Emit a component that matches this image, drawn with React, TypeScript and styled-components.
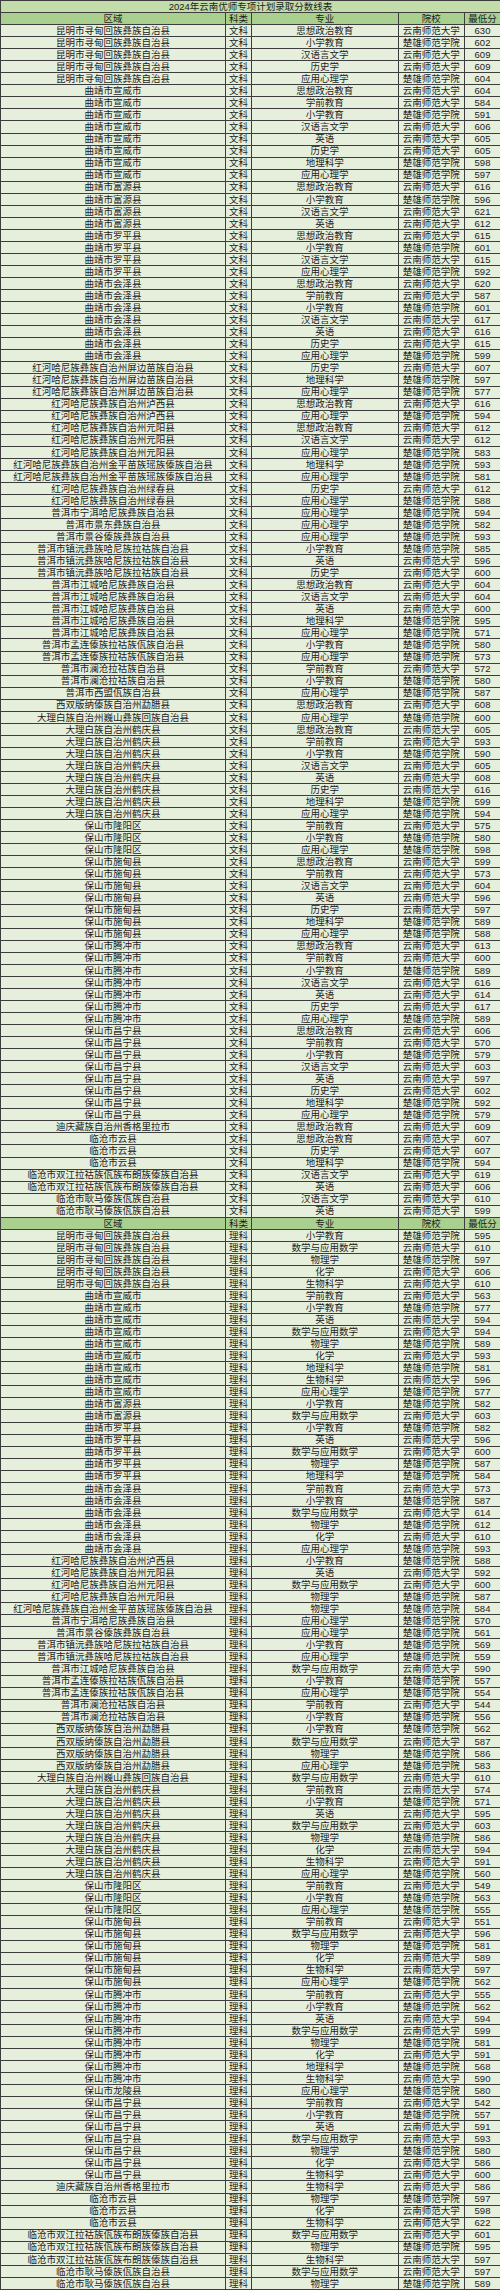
import styled, { createGlobalStyle } from "styled-components";

const YN = "云南师范大学";
const CX = "楚雄师范学院";

// 专业, 院校, 最低分
type Entry = [string, string, number];
type Group = [string, Entry[]];

const y = (major: string, score: number): Entry => [major, YN, score];
const c = (major: string, score: number): Entry => [major, CX, score];

const KM = "昆明市寻甸回族彝族自治县";
const XW = "曲靖市宣威市";
const FY = "曲靖市富源县";
const LP = "曲靖市罗平县";
const HZ = "曲靖市会泽县";
const PB = "红河哈尼族彝族自治州屏边苗族自治县";
const LX = "红河哈尼族彝族自治州泸西县";
const YY = "红河哈尼族彝族自治州元阳县";
const JP = "红河哈尼族彝族自治州金平苗族瑶族傣族自治县";
const LC = "红河哈尼族彝族自治州绿春县";
const NE = "普洱市宁洱哈尼族彝族自治县";
const JD = "普洱市景东彝族自治县";
const JG = "普洱市景谷傣族彝族自治县";
const ZY = "普洱市镇沅彝族哈尼族拉祜族自治县";
const JC = "普洱市江城哈尼族彝族自治县";
const ML = "普洱市孟连傣族拉祜族佤族自治县";
const LCang = "普洱市澜沧拉祜族自治县";
const XM = "普洱市西盟佤族自治县";
const MLa = "西双版纳傣族自治州勐腊县";
const WS = "大理白族自治州巍山彝族回族自治县";
const HQ = "大理白族自治州鹤庆县";
const LY = "保山市隆阳区";
const SD = "保山市施甸县";
const TC = "保山市腾冲市";
const LL = "保山市龙陵县";
const CN = "保山市昌宁县";
const XG = "迪庆藏族自治州香格里拉市";
const YX = "临沧市云县";
const SJ = "临沧市双江拉祜族佤族布朗族傣族自治县";
const GM = "临沧市耿马傣族佤族自治县";

const wenke: Group[] = [
  [KM, [y("思想政治教育", 630), c("小学教育", 602), y("汉语言文学", 609), y("历史学", 609), c("应用心理学", 604)]],
  [XW, [y("思想政治教育", 604), y("学前教育", 584), c("小学教育", 591), y("汉语言文学", 606), y("英语", 605), y("历史学", 605), c("地理科学", 598), c("应用心理学", 597)]],
  [FY, [y("思想政治教育", 616), c("小学教育", 596), y("汉语言文学", 621), y("英语", 612)]],
  [LP, [y("思想政治教育", 615), c("小学教育", 601), y("汉语言文学", 615), c("应用心理学", 592)]],
  [HZ, [y("思想政治教育", 620), y("学前教育", 587), c("小学教育", 601), y("汉语言文学", 617), y("英语", 616), y("历史学", 615), c("应用心理学", 599)]],
  [PB, [y("历史学", 607), c("地理科学", 597), c("应用心理学", 577)]],
  [LX, [y("思想政治教育", 616), c("应用心理学", 594)]],
  [YY, [y("思想政治教育", 612), y("汉语言文学", 612), c("应用心理学", 583)]],
  [JP, [c("地理科学", 593), c("应用心理学", 581)]],
  [LC, [y("历史学", 612), c("应用心理学", 588)]],
  [NE, [c("应用心理学", 594)]],
  [JD, [c("应用心理学", 582)]],
  [JG, [c("应用心理学", 593)]],
  [ZY, [c("小学教育", 585), y("英语", 596), y("历史学", 600)]],
  [JC, [y("思想政治教育", 604), y("汉语言文学", 604), y("英语", 600), c("地理科学", 595), c("应用心理学", 571)]],
  [ML, [c("小学教育", 580), c("应用心理学", 573)]],
  [LCang, [y("学前教育", 572), c("小学教育", 580)]],
  [XM, [c("应用心理学", 587)]],
  [MLa, [y("思想政治教育", 608)]],
  [WS, [c("应用心理学", 600)]],
  [HQ, [y("思想政治教育", 605), y("学前教育", 593), c("小学教育", 590), y("汉语言文学", 605), y("英语", 608), y("历史学", 616), c("地理科学", 599), c("应用心理学", 594)]],
  [LY, [y("学前教育", 575), c("小学教育", 580), c("应用心理学", 598)]],
  [SD, [y("思想政治教育", 599), y("学前教育", 573), y("汉语言文学", 604), y("英语", 596), y("历史学", 597), c("地理科学", 589), c("应用心理学", 588)]],
  [TC, [y("思想政治教育", 613), y("学前教育", 600), c("小学教育", 589), y("汉语言文学", 616), y("英语", 614), y("历史学", 617), c("应用心理学", 589)]],
  [CN, [y("思想政治教育", 606), y("学前教育", 570), c("小学教育", 579), y("汉语言文学", 603), y("英语", 597), y("历史学", 602), c("地理科学", 592), c("应用心理学", 579)]],
  [XG, [y("思想政治教育", 609)]],
  [YX, [y("思想政治教育", 607), y("历史学", 607), c("地理科学", 594)]],
  [SJ, [y("汉语言文学", 619), y("英语", 606)]],
  [GM, [y("汉语言文学", 610), y("英语", 599)]],
];

const like: Group[] = [
  [KM, [c("小学教育", 595), y("数学与应用数学", 610), c("物理学", 597), y("化学", 606), y("生物科学", 610)]],
  [XW, [y("学前教育", 563), c("小学教育", 577), y("英语", 594), y("数学与应用数学", 594), c("物理学", 589), y("化学", 593), c("地理科学", 581), y("生物科学", 596), c("应用心理学", 577)]],
  [FY, [c("小学教育", 582), y("数学与应用数学", 603)]],
  [LP, [c("小学教育", 582), y("英语", 596), y("数学与应用数学", 600), c("物理学", 587), c("地理科学", 584)]],
  [HZ, [y("学前教育", 573), c("小学教育", 587), y("数学与应用数学", 614), c("物理学", 612), y("化学", 610), c("应用心理学", 593)]],
  [LX, [c("小学教育", 588)]],
  [YY, [y("英语", 592), y("数学与应用数学", 600), c("物理学", 587)]],
  [JP, [c("物理学", 584)]],
  [NE, [c("应用心理学", 570)]],
  [JG, [c("应用心理学", 561)]],
  [ZY, [c("小学教育", 569), c("应用心理学", 559)]],
  [JC, [y("数学与应用数学", 590)]],
  [ML, [c("小学教育", 557), c("应用心理学", 554)]],
  [LCang, [y("学前教育", 544), c("小学教育", 556)]],
  [MLa, [c("小学教育", 562), y("数学与应用数学", 587), c("物理学", 586), c("应用心理学", 583)]],
  [WS, [y("数学与应用数学", 610)]],
  [HQ, [y("学前教育", 574), c("小学教育", 571), y("英语", 595), y("数学与应用数学", 603), c("物理学", 586), y("化学", 594), y("生物科学", 591), c("应用心理学", 560)]],
  [LY, [y("学前教育", 549), c("小学教育", 563), c("应用心理学", 555)]],
  [SD, [y("学前教育", 551), y("数学与应用数学", 596), c("物理学", 581), y("化学", 589), y("生物科学", 597), c("应用心理学", 562)]],
  [TC, [y("学前教育", 555), c("小学教育", 562), y("英语", 594), y("数学与应用数学", 599), c("物理学", 581), y("化学", 591), c("地理科学", 568), y("生物科学", 590)]],
  [LL, [c("应用心理学", 580)]],
  [CN, [y("学前教育", 542), c("小学教育", 557), y("英语", 591), y("数学与应用数学", 593), c("物理学", 580), y("化学", 586), y("生物科学", 600)]],
  [XG, [y("生物科学", 586)]],
  [YX, [c("物理学", 597), y("化学", 598), y("生物科学", 622)]],
  [SJ, [y("数学与应用数学", 601), c("物理学", 595), y("生物科学", 597)]],
  [GM, [y("数学与应用数学", 597), c("物理学", 589)]],
];

const GlobalStyle = createGlobalStyle`
  html, body {
    margin: 0;
    padding: 0;
    background: #e5efdc;
  }
  body {
    font-family: "Liberation Sans", "Noto Sans CJK SC", sans-serif;
    color: #1c1c1c;
  }
`;

const ROW_H = "12.05px";
const LINE = "#3d3d3d";

const Sheet = styled.div`
  width: 500px;
  box-sizing: border-box;
  border-top: 1px solid ${LINE};
  border-left: 1px solid ${LINE};
  background: #e5efdc;
`;

const TitleRow = styled.div`
  display: flex;
  align-items: center;
  justify-content: center;
  box-sizing: border-box;
  height: ${ROW_H};
  background: #c2dcaa;
  border-bottom: 1px solid ${LINE};
  font-size: 9.5px;
  line-height: 1;
`;

const Row = styled.div<{ $head?: boolean }>`
  display: grid;
  grid-template-columns: 225px 26px 146.5px 66.5px 35px;
  box-sizing: border-box;
  height: ${ROW_H};
  background: ${(p) => (p.$head ? "#a9d08e" : "#e5efdc")};
  border-bottom: 1px solid ${LINE};
`;

const Cell = styled.div`
  display: flex;
  align-items: center;
  justify-content: center;
  overflow: hidden;
  white-space: nowrap;
  border-right: 1px solid ${LINE};
  font-size: 9.5px;
  line-height: 1;

  &:last-child {
    border-right: none;
  }
`;

function HeaderRow() {
  return (
    <Row $head>
      <Cell>区域</Cell>
      <Cell>科类</Cell>
      <Cell>专业</Cell>
      <Cell>院校</Cell>
      <Cell>最低分</Cell>
    </Row>
  );
}

function Section({ kind, groups }: { kind: string; groups: Group[] }) {
  return (
    <>
      <HeaderRow />
      {groups.flatMap(([region, entries], gi) =>
        entries.map(([major, school, score], ei) => (
          <Row key={`${gi}-${ei}`}>
            <Cell>{region}</Cell>
            <Cell>{kind}</Cell>
            <Cell>{major}</Cell>
            <Cell>{school}</Cell>
            <Cell>{score}</Cell>
          </Row>
        ))
      )}
    </>
  );
}

export default function App() {
  return (
    <>
      <GlobalStyle />
      <Sheet>
        <TitleRow>2024年云南优师专项计划录取分数线表</TitleRow>
        <Section kind="文科" groups={wenke} />
        <Section kind="理科" groups={like} />
      </Sheet>
    </>
  );
}
